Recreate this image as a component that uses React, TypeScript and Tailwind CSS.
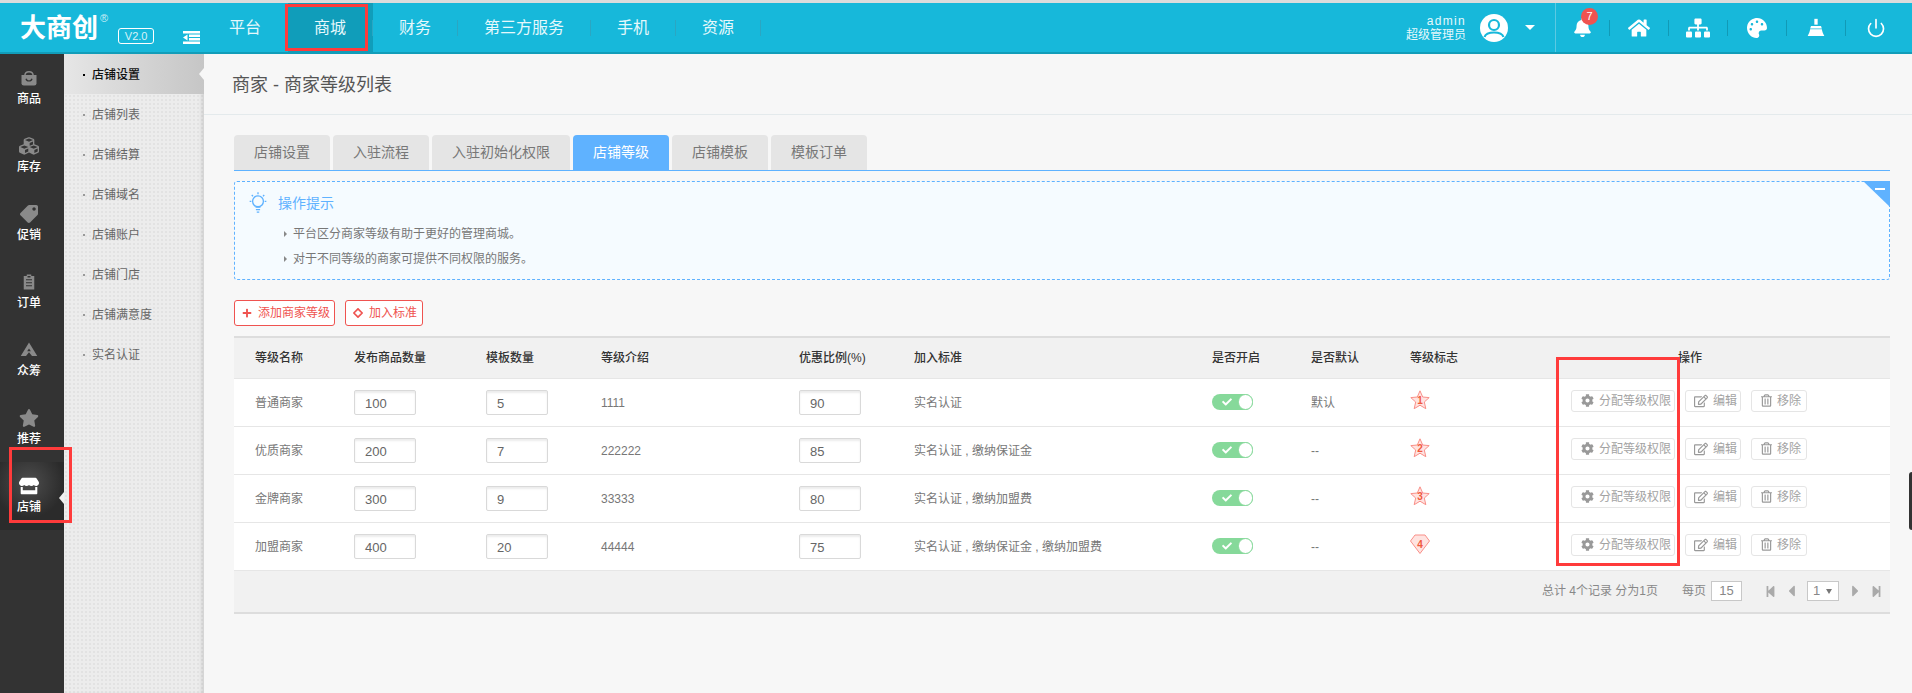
import React from 'react';
import {
  FaBell,
  FaCheck,
  FaCog,
  FaCubes,
  FaHome,
  FaPalette,
  FaPlus,
  FaRegEdit,
  FaRegTrashAlt,
  FaSitemap,
  FaStar,
  FaStepBackward,
  FaStepForward,
  FaStore,
  FaTag,
  FaCaretLeft,
  FaCaretRight,
} from 'react-icons/fa';
import { Power } from 'lucide-react';

const BasketIcon = () => (
  <svg viewBox="0 0 24 24" className="w-[18px] h-[20px]" fill="#8a8a8a">
    <path d="M6.500 9c0-7 11-7 11 0" fill="none" stroke="#8a8a8a" strokeWidth="2" />
    <path d="M2 8h20v11a3 3 0 0 1-3 3H5a3 3 0 0 1-3-3z" />
    <path d="M8 13c1 4 7 4 8 0" fill="none" stroke="#333" strokeWidth="1.600" />
  </svg>
);

const OrderIcon = () => (
  <svg viewBox="0 0 24 24" className="w-[18px] h-[20px]" fill="#8a8a8a">
    <path d="M9 2h6v2h4v18H5V4h4z" />
    <path d="M8 9h8M8 13h8M8 17h8" stroke="#333" strokeWidth="1.600" />
    <path d="M10 4h4v2h-4z" fill="#333" />
  </svg>
);

const RaiseIcon = () => (
  <svg viewBox="0 0 24 24" className="w-[20px] h-[18px]" fill="#8a8a8a">
    <path d="M12 2l11 18h-7l-4-5-4 5H1z" />
    <path d="M12 10l2.500 3.500h-5z" fill="#333" />
  </svg>
);

const BroomIcon = () => (
  <svg viewBox="0 0 24 24" className="w-[20px] h-[20px]" fill="#fff">
    <path d="M10 1h4v7h-4z" />
    <path d="M6 9.500h12l1 3H5z" />
    <path d="M5 13.500h14c.5 3 1.500 5.500 3 8H2c1.500-2.500 2.500-5 3-8z" />
  </svg>
);

const BulbIcon = () => (
  <svg viewBox="0 0 24 28" className="w-[20px] h-[24px]" fill="none" stroke="#5fb2ff" strokeWidth="1.600">
    <circle cx="12" cy="12" r="6.500" />
    <path d="M9 19h6M9.500 22h5M10.500 25h3M12 1v2.500M2 12h2M20 12h2M4.500 4.500l1.500 1.500M19.500 4.500L18 6" />
  </svg>
);

const TargetIcon = () => (
  <svg viewBox="0 0 12 12" className="w-[10px] h-[10px]" fill="none" stroke="#ef5350" strokeWidth="2">
    <path d="M6 1l5 5-5 5-5-5z" />
  </svg>
);

const ToggleIcon = () => (
  <svg viewBox="0 0 17 13" className="w-[17px] h-[13px]" fill="#fff">
    <path d="M0 0h17v2.500H0zM6 3.500h11v2.500H6zM6 7h11v2.500H6zM0 10.500h17V13H0zM4.500 3.500v6L0 6.500z" />
  </svg>
);

const LevelBadge = ({ n, diamond }: { n: number; diamond?: boolean }) => (
  <svg viewBox="0 0 20 20" className="block w-[20px] h-[20px] mb-[4px]">
    {diamond ? (
      <path d="M5 1h10l4.500 6L10 19.500.5 7z" fill="#ffe3e0" stroke="#f98f88" strokeWidth="1" />
    ) : (
      <path d="M10 .8l2.700 6.200 6.500.6-4.900 4.400 1.500 6.700L10 15.200l-5.800 3.500 1.500-6.700L.8 7.600l6.500-.6z" fill="#ffe3e0" stroke="#f98f88" strokeWidth="1" />
    )}
    <text x="10" y="13.500" textAnchor="middle" fontSize="10" fontWeight="700" fontFamily="Liberation Sans" fill="#f0593e">{n}</text>
  </svg>
);

const sideItems = [
  { label: '商品', icon: <BasketIcon /> },
  { label: '库存', icon: <FaCubes className="w-[20px] h-[20px] text-[#8a8a8a]" /> },
  { label: '促销', icon: <FaTag className="w-[18px] h-[18px] text-[#8a8a8a] -scale-x-100" /> },
  { label: '订单', icon: <OrderIcon /> },
  { label: '众筹', icon: <RaiseIcon /> },
  { label: '推荐', icon: <FaStar className="w-[20px] h-[20px] text-[#8a8a8a]" /> },
];

const subItems = ['店铺设置', '店铺列表', '店铺结算', '店铺域名', '店铺账户', '店铺门店', '店铺满意度', '实名认证'];
const navItems = ['平台', '商城', '财务', '第三方服务', '手机', '资源'];
const tabs = ['店铺设置', '入驻流程', '入驻初始化权限', '店铺等级', '店铺模板', '模板订单'];

const rows = [
  { name: '普通商家', goods: '100', tpl: '5', intro: '1111', rate: '90', std: '实名认证', def: '默认', n: 1 },
  { name: '优质商家', goods: '200', tpl: '7', intro: '222222', rate: '85', std: '实名认证 , 缴纳保证金', def: '--', n: 2 },
  { name: '金牌商家', goods: '300', tpl: '9', intro: '33333', rate: '80', std: '实名认证 , 缴纳加盟费', def: '--', n: 3 },
  { name: '加盟商家', goods: '400', tpl: '20', intro: '44444', rate: '75', std: '实名认证 , 缴纳保证金 , 缴纳加盟费', def: '--', n: 4 },
];

const NumInput = ({ value }: { value: string }) => (
  <div className="w-[62px] h-[25px] bg-white border border-[#d9d9d9] rounded-[2px] shadow-[inset_0_2px_2px_rgba(0,0,0,0.08)] pl-[10px] pt-[1px] text-[13px] leading-[24px] text-[#666]">
    {value}
  </div>
);

const ActionButton = ({ icon, label, className }: { icon: React.ReactNode; label: string; className: string }) => (
  <div className={`h-[22px] flex items-center gap-[5px] bg-white border border-[#e5e5e5] rounded-[3px] text-[12px] text-[#a3a3a3] ${className}`}>
    {icon}
    <span>{label}</span>
  </div>
);

const HeaderIcon = ({ children, sep = true }: { children: React.ReactNode; sep?: boolean }) => (
  <div className={`w-[59px] h-[16px] flex items-center justify-center ${sep ? 'border-r border-[#119ab6]' : ''}`}>
    {children}
  </div>
);

export default function App() {
  return (
    <div className="relative h-screen overflow-hidden flex flex-col bg-[#f7f7f7] font-['Liberation_Sans','Noto_Sans_CJK_SC',sans-serif]">
      <div className="h-[3px] shrink-0 bg-[#dcdcdc]" />

      {/* Header */}
      <header className="h-[51px] shrink-0 flex items-center pr-[7px] bg-[#17b8da] border-b-2 border-[#129db9] text-white">
        <div className="w-[203px] shrink-0 flex items-center pl-[20px] relative h-full">
          <span className="text-[26px] leading-[30px] font-bold">大商创</span>
          <span className="text-[11px] leading-none self-start mt-[10px] ml-[2px] text-[#cdeef6]">®</span>
          <span className="w-[36px] h-[16px] mt-[17px] ml-[10px] border border-white rounded-[3px] text-[11px] leading-[14px] text-center text-[#d8f3f9]">V2.0</span>
          <span className="absolute left-[183px] top-[28px]">
            <ToggleIcon />
          </span>
        </div>
        <nav className="flex items-center h-full">
          {navItems.map((item, i) => (
            <div key={item} className={`h-full flex items-center ${i === 1 ? 'bg-[#109dba]' : ''}`}>
              <span className="px-[26px] h-[16px] flex items-center border-r border-[#2ba6c2] text-[16px] text-[#e6f8fc]">{item}</span>
            </div>
          ))}
        </nav>
        <div className="flex-1" />
        <div className="flex flex-col items-end text-[12px] leading-[14px] mr-[14px] text-[#e6f8fc]">
          <span className="tracking-[1.3px]">admin</span>
          <span>超级管理员</span>
        </div>
        <svg viewBox="0 0 28 28" className="w-[28px] h-[28px]">
          <circle cx="14" cy="14" r="14" fill="#fff" />
          <circle cx="14" cy="11" r="5" fill="none" stroke="#17b8da" strokeWidth="2.200" />
          <path d="M4.500 23c2-6 17-6 19 0" fill="none" stroke="#17b8da" strokeWidth="2.200" />
        </svg>
        <div className="ml-[17px] mr-[20px] w-0 h-0 border-x-[5px] border-x-transparent border-t-[5px] border-t-white" />
        <div className="h-full w-px bg-[#5cc9e2]" />
        <div className="relative w-[54px] h-[16px] flex items-center justify-center border-r border-[#119ab6]">
          <FaBell className="w-[19px] h-[19px]" />
          <span className="absolute left-[25px] top-[-12px] w-[17px] h-[17px] rounded-full bg-[#ef5350] text-[11px] leading-[17px] text-center">7</span>
        </div>
        <HeaderIcon><FaHome className="w-[22px] h-[20px]" /></HeaderIcon>
        <HeaderIcon><FaSitemap className="w-[24px] h-[20px]" /></HeaderIcon>
        <HeaderIcon><FaPalette className="w-[22px] h-[20px]" /></HeaderIcon>
        <HeaderIcon><BroomIcon /></HeaderIcon>
        <HeaderIcon sep={false}><Power className="w-[20px] h-[20px]" strokeWidth={2} /></HeaderIcon>
      </header>

      <div className="flex-1 flex min-h-0">
        {/* Left icon rail */}
        <aside className="w-16 shrink-0 bg-[#333333] text-white">
          {sideItems.map((item) => (
            <div key={item.label} className="h-[68px] pr-[6px] flex flex-col items-center">
              <div className="h-[22px] mt-[13px] flex items-center justify-center">{item.icon}</div>
              <span className="mt-[2px] text-[12px] leading-[16px] font-medium">{item.label}</span>
            </div>
          ))}
          <div className="relative h-[68px] pr-[6px] flex flex-col items-center bg-[radial-gradient(circle_at_45%_30%,#4d4d4d_0%,#2b2b2b_60%)]">
            <div className="h-[22px] mt-[13px] flex items-center justify-center">
              <FaStore className="w-[20px] h-[18px] text-white" />
            </div>
            <span className="mt-[2px] text-[12px] leading-[16px] font-medium">店铺</span>
            <span className="absolute right-0 top-[30px] w-0 h-0 border-y-[6px] border-y-transparent border-r-[5px] border-r-[#f0f0f0]" />
          </div>
        </aside>

        {/* Sub menu */}
        <aside className="w-[140px] shrink-0 bg-[#ececec] bg-[radial-gradient(#e2e2e2_1px,transparent_1px)] bg-[length:4px_4px] shadow-[inset_-4px_0_4px_-2px_rgba(0,0,0,0.12)]">
          {subItems.map((item, i) => (
            <div
              key={item}
              className={`relative h-10 flex items-center pl-[19px] pt-[1px] text-[12px] ${i === 0 ? 'bg-linear-to-r from-[#e6e6e6] to-[#c6c6c6] font-medium text-[#111]' : 'text-[#666]'}`}
            >
              <span className={`w-[2px] h-[2px] mr-[7px] ${i === 0 ? 'bg-black' : 'bg-[#999]'}`} />
              {item}
              {i === 0 && (
                <span className="absolute right-0 top-[14px] w-0 h-0 border-y-[6px] border-y-transparent border-r-[5px] border-r-[#f7f7f7]" />
              )}
            </div>
          ))}
        </aside>

        {/* Main */}
        <main className="flex-1 min-w-0">
          <div className="h-[61px] flex items-center pl-[28px] pt-[2px] border-b border-[#e4eaec] text-[18px] text-[#555]">
            商家 - 商家等级列表
          </div>
          <div className="pl-[30px] pr-[22px] pt-[20px]">
            {/* Tabs */}
            <div className="flex gap-[3px] border-b border-[#5fb2ff]">
              {tabs.map((tab, i) => (
                <div
                  key={tab}
                  className={`h-[35px] px-[20px] rounded-t-[4px] text-[14px] leading-[35px] ${i === 3 ? 'bg-[#5fb2ff] text-white' : 'bg-[#e5e5e5] text-[#777]'}`}
                >
                  {tab}
                </div>
              ))}
            </div>

            {/* Tips */}
            <div className="relative mt-[10px] h-[99px] border border-dashed border-[#5fb2ff] rounded-[3px] bg-[#f5fbff]">
              <div className="flex items-center gap-[10px] h-[24px] mt-[9px] pl-[13px] text-[14px] text-[#5fb2ff]">
                <BulbIcon />
                操作提示
              </div>
              <ul className="mt-[6px] pl-[49px] text-[12px] text-[#777]">
                <li className="h-[25px] flex items-center gap-[6px]">
                  <span className="w-0 h-0 border-y-[3px] border-y-transparent border-l-[3px] border-l-[#888]" />
                  平台区分商家等级有助于更好的管理商城。
                </li>
                <li className="h-[25px] flex items-center gap-[6px]">
                  <span className="w-0 h-0 border-y-[3px] border-y-transparent border-l-[3px] border-l-[#888]" />
                  对于不同等级的商家可提供不同权限的服务。
                </li>
              </ul>
              <svg viewBox="0 0 27 26" className="absolute right-[-1px] top-[-1px] w-[27px] h-[26px]">
                <path d="M0 0h27v26z" fill="#5fb2ff" />
                <path d="M12 7h10v2H12z" fill="#fff" />
              </svg>
            </div>

            {/* Buttons */}
            <div className="flex gap-[10px] mt-[20px]">
              <div className="h-[26px] w-[101px] flex items-center gap-[6px] pl-[7px] border border-[#ef5350] rounded-[3px] bg-white text-[12px] text-[#ef5350]">
                <FaPlus className="w-[10px] h-[10px]" />
                添加商家等级
              </div>
              <div className="h-[26px] w-[78px] flex items-center gap-[6px] pl-[7px] border border-[#ef5350] rounded-[3px] bg-white text-[12px] text-[#ef5350]">
                <TargetIcon />
                加入标准
              </div>
            </div>

            {/* Table */}
            <div className="mt-[10px] border-t-2 border-b-2 border-t-[#dddddd] border-b-[#dddddd] bg-[#f1f1f1]">
              <table className="w-full table-fixed border-collapse text-[12px] text-left">
                <colgroup>
                  <col className="w-[120px]" />
                  <col className="w-[132px]" />
                  <col className="w-[115px]" />
                  <col className="w-[198px]" />
                  <col className="w-[115px]" />
                  <col className="w-[298px]" />
                  <col className="w-[99px]" />
                  <col className="w-[99px]" />
                  <col className="w-[161px]" />
                  <col />
                </colgroup>
                <thead>
                  <tr className="h-[40px] text-[#333] border-b border-[#e6e6e6]">
                    <th className="pl-[21px] font-medium">等级名称</th>
                    <th className="font-medium">发布商品数量</th>
                    <th className="font-medium">模板数量</th>
                    <th className="font-medium">等级介绍</th>
                    <th className="font-medium">优惠比例(%)</th>
                    <th className="font-medium">加入标准</th>
                    <th className="font-medium">是否开启</th>
                    <th className="font-medium">是否默认</th>
                    <th className="font-medium">等级标志</th>
                    <th className="pl-[107px] font-medium">操作</th>
                  </tr>
                </thead>
                <tbody className="bg-white text-[#777]">
                  {rows.map((row) => (
                    <tr key={row.name} className="h-[48px] border-b border-[#e6e6e6]">
                      <td className="pl-[21px] pt-[1px]">{row.name}</td>
                      <td><NumInput value={row.goods} /></td>
                      <td><NumInput value={row.tpl} /></td>
                      <td className="pt-[1px]">{row.intro}</td>
                      <td><NumInput value={row.rate} /></td>
                      <td className="pt-[1px]">{row.std}</td>
                      <td>
                        <div className="relative w-[41px] h-[16px] rounded-full bg-[#86d99a]">
                          <FaCheck className="absolute left-[10px] top-[3px] w-[10px] h-[10px] text-white" />
                          <span className="absolute right-0 top-0 w-[15px] h-[16px] rounded-full bg-white border border-[#86d99a]" />
                        </div>
                      </td>
                      <td className="pt-[1px]">{row.def}</td>
                      <td><LevelBadge n={row.n} diamond={row.n === 4} /></td>
                      <td>
                        <div className="flex gap-[10px] mb-[3px]">
                          <ActionButton
                            className="w-[104px] pl-[9px]"
                            icon={<FaCog className="w-[13px] h-[13px] text-[#999]" />}
                            label="分配等级权限"
                          />
                          <ActionButton
                            className="w-[56px] pl-[8px]"
                            icon={<FaRegEdit className="w-[14px] h-[14px] text-[#999]" />}
                            label="编辑"
                          />
                          <ActionButton
                            className="w-[56px] pl-[9px]"
                            icon={<FaRegTrashAlt className="w-[11px] h-[13px] text-[#999]" />}
                            label="移除"
                          />
                        </div>
                      </td>
                    </tr>
                  ))}
                </tbody>
              </table>

              {/* Pagination */}
              <div className="h-[41px] flex items-center text-[12px] text-[#888]">
                <span className="ml-[1308px]">总计 4个记录 分为1页</span>
                <span className="ml-[24px]">每页</span>
                <span className="ml-[5px] w-[31px] h-[20px] bg-white border border-[#c8c8c8] text-center text-[13px] leading-[18px]">15</span>
                <FaStepBackward className="ml-[23px] w-[11px] h-[13px] text-[#aaa]" />
                <FaCaretLeft className="ml-[10px] w-[11px] h-[18px] text-[#aaa]" />
                <span className="ml-[10px] w-[32px] h-[20px] bg-white border border-[#c8c8c8] pl-[5px] text-[13px] leading-[18px] flex items-center gap-[6px]">
                  1
                  <span className="w-0 h-0 border-x-[3px] border-x-transparent border-t-[5px] border-t-[#777]" />
                </span>
                <FaCaretRight className="ml-[11px] w-[11px] h-[18px] text-[#aaa]" />
                <FaStepForward className="ml-[10px] w-[11px] h-[13px] text-[#aaa]" />
              </div>
            </div>
          </div>
        </main>
      </div>

      {/* Annotation boxes drawn over the page */}
      <div className="absolute left-[285px] top-[4px] w-[83px] h-[47px] border-[3px] border-[#ff3b3b]" />
      <div className="absolute left-[9px] top-[447px] w-[63px] h-[76px] border-[3px] border-[#ff3b3b]" />
      <div className="absolute left-[1556px] top-[357px] w-[124px] h-[209px] border-[3px] border-[#ff3b3b]" />
      <div className="absolute right-0 top-[472px] w-[3px] h-[58px] rounded-l-[3px] bg-[#333]" />
    </div>
  );
}
